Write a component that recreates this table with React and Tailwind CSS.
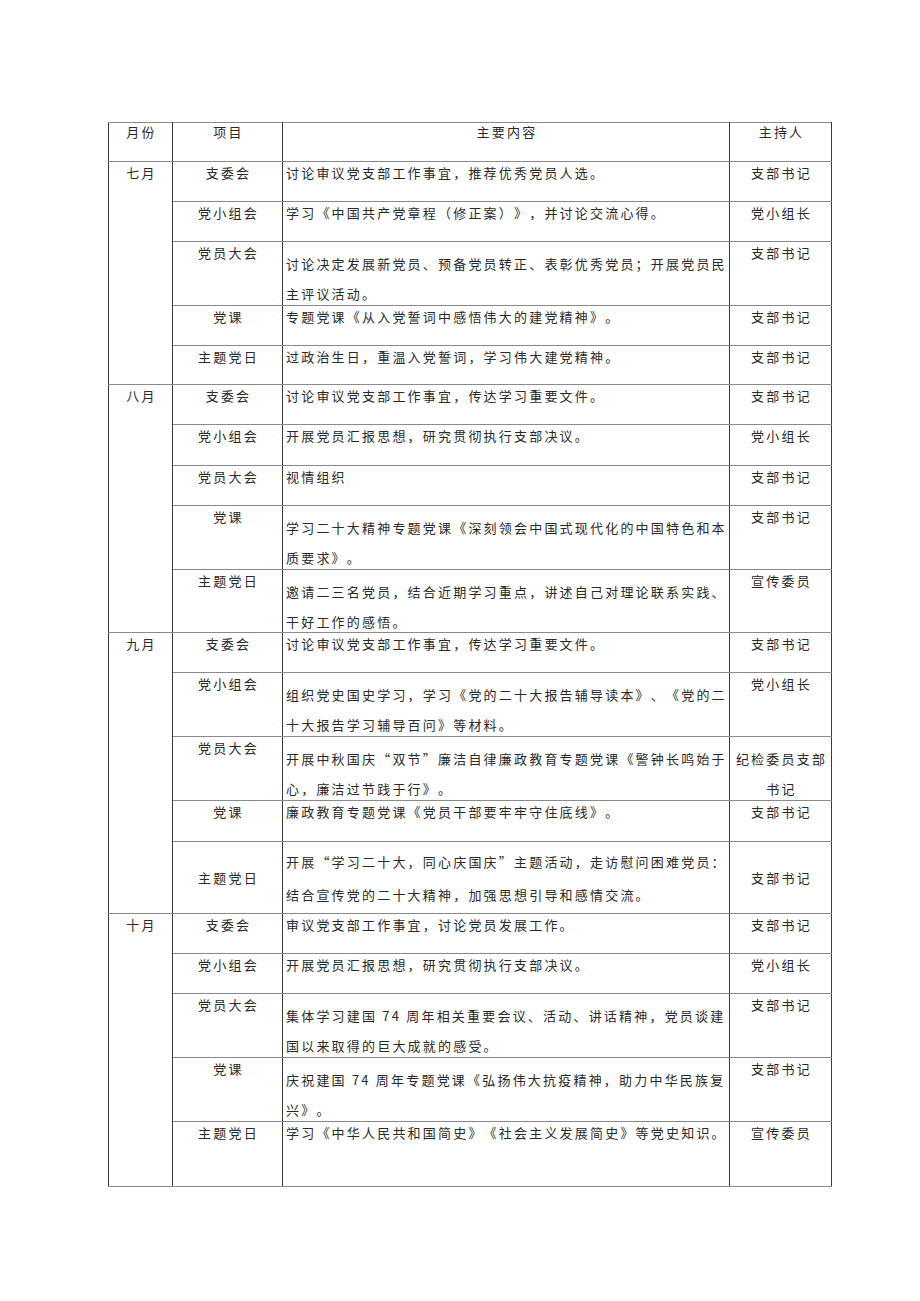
import React from 'react';

const months = [
  {
    month: '七月',
    rows: [
      { item: '支委会', content: ['讨论审议党支部工作事宜，推荐优秀党员人选。'], host: ['支部书记'], h: 'h-[40px]' },
      { item: '党小组会', content: ['学习《中国共产党章程（修正案）》，并讨论交流心得。'], host: ['党小组长'], h: 'h-[40px]' },
      {
        item: '党员大会',
        content: ['讨论决定发展新党员、预备党员转正、表彰优秀党员；开展党员民', '主评议活动。'],
        host: ['支部书记'],
        h: 'h-[64px]',
      },
      { item: '党课', content: ['专题党课《从入党誓词中感悟伟大的建党精神》。'], host: ['支部书记'], h: 'h-[40px]' },
      { item: '主题党日', content: ['过政治生日，重温入党誓词，学习伟大建党精神。'], host: ['支部书记'], h: 'h-[39px]' },
    ],
  },
  {
    month: '八月',
    rows: [
      { item: '支委会', content: ['讨论审议党支部工作事宜，传达学习重要文件。'], host: ['支部书记'], h: 'h-[40px]' },
      { item: '党小组会', content: ['开展党员汇报思想，研究贯彻执行支部决议。'], host: ['党小组长'], h: 'h-[41px]' },
      { item: '党员大会', content: ['视情组织'], host: ['支部书记'], h: 'h-[40px]' },
      {
        item: '党课',
        content: ['学习二十大精神专题党课《深刻领会中国式现代化的中国特色和本', '质要求》。'],
        host: ['支部书记'],
        h: 'h-[64px]',
      },
      {
        item: '主题党日',
        content: ['邀请二三名党员，结合近期学习重点，讲述自己对理论联系实践、', '干好工作的感悟。'],
        host: ['宣传委员'],
        h: 'h-[63px]',
      },
    ],
  },
  {
    month: '九月',
    rows: [
      { item: '支委会', content: ['讨论审议党支部工作事宜，传达学习重要文件。'], host: ['支部书记'], h: 'h-[40px]' },
      {
        item: '党小组会',
        content: ['组织党史国史学习，学习《党的二十大报告辅导读本》、《党的二', '十大报告学习辅导百问》等材料。'],
        host: ['党小组长'],
        h: 'h-[64px]',
      },
      {
        item: '党员大会',
        content: ['开展中秋国庆“双节”廉洁自律廉政教育专题党课《警钟长鸣始于', '心，廉洁过节践于行》。'],
        host: ['纪检委员支部', '书记'],
        h: 'h-[64px]',
      },
      { item: '党课', content: ['廉政教育专题党课《党员干部要牢牢守住底线》。'], host: ['支部书记'], h: 'h-[41px]' },
      {
        item: '主题党日',
        content: ['开展“学习二十大，同心庆国庆”主题活动，走访慰问困难党员：', '结合宣传党的二十大精神，加强思想引导和感情交流。'],
        host: ['支部书记'],
        h: 'h-[72px]',
        middle: true,
      },
    ],
  },
  {
    month: '十月',
    rows: [
      { item: '支委会', content: ['审议党支部工作事宜，讨论党员发展工作。'], host: ['支部书记'], h: 'h-[40px]' },
      { item: '党小组会', content: ['开展党员汇报思想，研究贯彻执行支部决议。'], host: ['党小组长'], h: 'h-[40px]' },
      {
        item: '党员大会',
        content: ['集体学习建国 74 周年相关重要会议、活动、讲话精神，党员谈建', '国以来取得的巨大成就的感受。'],
        host: ['支部书记'],
        h: 'h-[64px]',
      },
      {
        item: '党课',
        content: ['庆祝建国 74 周年专题党课《弘扬伟大抗疫精神，助力中华民族复', '兴》。'],
        host: ['支部书记'],
        h: 'h-[64px]',
      },
      {
        item: '主题党日',
        content: ['学习《中华人民共和国简史》《社会主义发展简史》等党史知识。'],
        host: ['宣传委员'],
        h: 'h-[65px]',
      },
    ],
  },
];

const cell = 'border-y border-y-[#8a8a8a] border-x border-x-[#3a3a3a] p-0';

// one or more text lines; lines are broken by hand like the source document
const Lines = ({ lines, center, middle }) => {
  const multi = lines.length > 1;
  let box = 'leading-[22px] pt-[0px]';
  // negative bottom margin keeps two-line cells inside the fixed row height
  if (multi) box = 'leading-[30px] pt-[7px] -mb-[6px]';
  if (middle) box = 'leading-[33px] py-0';
  return (
    <div className={`${box} ${center ? 'text-center pl-[2px]' : 'pl-[3px]'}`}>
      {lines.map((l, i) => (
        <div key={i} className="whitespace-nowrap">
          {l}
        </div>
      ))}
    </div>
  );
};

const App = () => {
  return (
    <div
      className="min-h-[1301px] bg-white pt-[122px] pl-[108px] text-[13px] tracking-[2.2px] text-[#2a2a2a] [text-spacing-trim:space-all]"
      style={{ fontFamily: '"Noto Sans CJK SC", "Liberation Sans", sans-serif' }}
    >
      <table className="w-[723px] table-fixed border-collapse">
        <colgroup>
          <col className="w-[64px]" />
          <col className="w-[110px]" />
          <col className="w-[447px]" />
          <col className="w-[102px]" />
        </colgroup>
        <thead>
          <tr>
            <th className={`${cell} h-[39px] align-top font-normal`}>
              <div className="leading-[18px] text-center pl-[2px]">月份</div>
            </th>
            <th className={`${cell} align-top font-normal`}>
              <div className="leading-[18px] text-center pl-[2px]">项目</div>
            </th>
            <th className={`${cell} align-top font-normal`}>
              <div className="leading-[18px] text-center pl-[2px]">主要内容</div>
            </th>
            <th className={`${cell} align-top font-normal`}>
              <div className="leading-[18px] text-center pl-[2px]">主持人</div>
            </th>
          </tr>
        </thead>
        <tbody>
          {months.map((m) =>
            m.rows.map((r, i) => (
              <tr key={m.month + r.item}>
                {i === 0 && (
                  <td rowSpan={m.rows.length} className={`${cell} align-top`}>
                    <div className="leading-[22px] text-center pl-[2px]">{m.month}</div>
                  </td>
                )}
                <td className={`${cell} ${r.h} ${r.middle ? 'align-middle' : 'align-top'}`}>
                  <Lines lines={[r.item]} center />
                </td>
                <td className={`${cell} ${r.middle ? 'align-middle' : 'align-top'}`}>
                  <Lines lines={r.content} middle={r.middle} />
                </td>
                <td className={`${cell} ${r.middle ? 'align-middle' : 'align-top'}`}>
                  <Lines lines={r.host} center />
                </td>
              </tr>
            ))
          )}
        </tbody>
      </table>
    </div>
  );
};

export default App;
